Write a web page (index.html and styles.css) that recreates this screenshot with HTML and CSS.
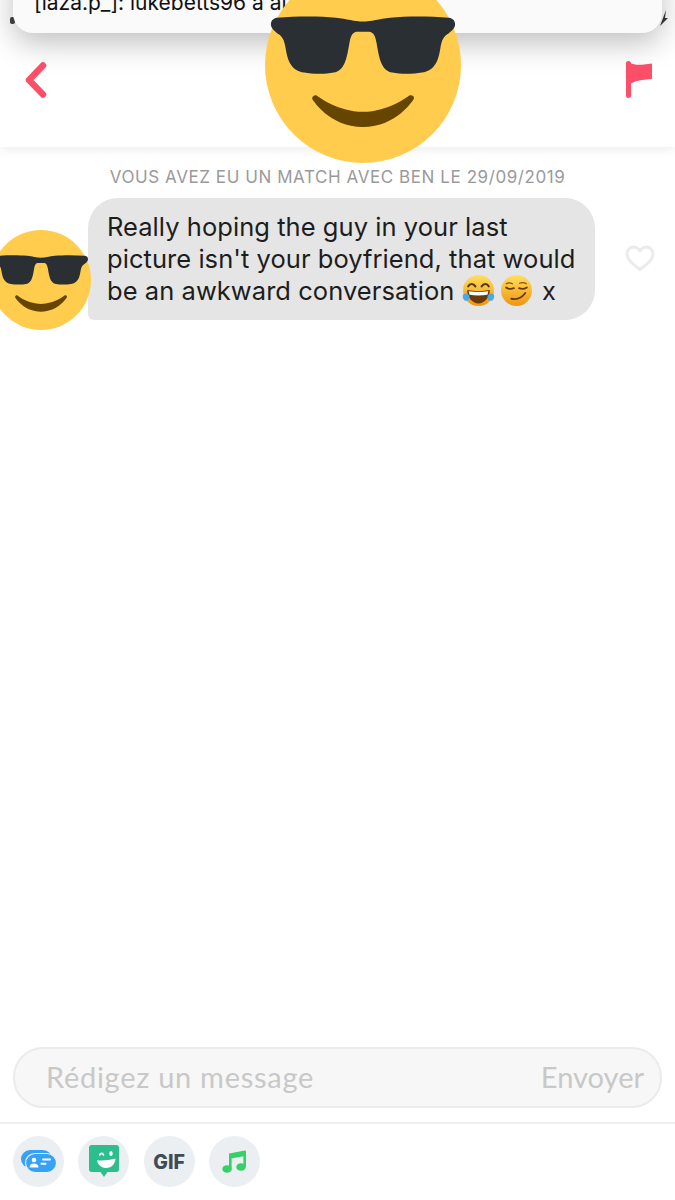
FILE: index.html
```html
<!DOCTYPE html>
<html lang="fr">
<head>
    <meta charset="UTF-8">
    <meta name="viewport" content="width=device-width, initial-scale=1.0">
    <title>Conversation</title>
    <link rel="stylesheet" href="styles.css">
</head>
<body>
    <svg class="defs" width="0" height="0">
        <symbol id="cool" viewBox="0 0 36 36">
            <circle cx="18" cy="18" r="18" fill="#ffcc4d"/>
            <path fill="#664500" d="M8.900 23.700C9.100 23.500 9.300 23.500 9.500 23.600C9.500 23.600 13.300 26.600 18 26.600C22.700 26.600 26.500 23.600 26.500 23.600C26.700 23.500 27 23.500 27.200 23.700C27.400 23.900 27.400 24.100 27.300 24.300C27.300 24.300 24.200 29.400 18 29.400C11.800 29.400 8.700 24.300 8.700 24.300C8.600 24.100 8.700 23.900 8.900 23.700Z"/>
            <path fill="#292f33" d="M2.200 9.300C6 9 10 9 13 9.300C15 9.500 16.500 10 18 10C19.500 10 21 9.500 23 9.300C26 9 30 9 33.800 9.300C34.600 9.400 35 10 34.900 10.700C34.800 11.400 34 12 33.400 12.400C32.600 13 32.400 13.800 32.200 15C31.800 17.300 31.200 19 28.800 19.400C27.200 19.700 24.800 19.700 23.400 19.400C21.400 19 21 17 20.500 14C20.200 12.300 19.800 11.900 18.900 11.900H17.100C16.200 11.900 15.800 12.300 15.500 14C15 17 14.600 19 12.600 19.400C11.200 19.700 8.800 19.700 7.200 19.400C4.800 19 4.200 17.300 3.800 15C3.600 13.800 3.400 13 2.600 12.400C2 12 1.200 11.400 1.100 10.700C1 10 1.400 9.400 2.200 9.300Z"/>
        </symbol>
    </svg>

    <span class="status-dot"></span>
    <svg class="status-bolt" viewBox="0 0 8 16"><path fill="#3a3a3a" d="M6 0 0 16l8-8H5z"/></svg>

    <header class="top-bar">
        <svg class="back" viewBox="0 0 24 36"><path d="M19 3.500 5 18l14 14.500" fill="none" stroke="#fd5068" stroke-width="6.500" stroke-linecap="round" stroke-linejoin="round"/></svg>
        <svg class="flag" viewBox="0 0 28 37"><path fill="#fd5068" d="M1 2.500a2.500 2.500 0 0 1 5 0C10 4 15 4 19 3.500L27 2.500V18C22 18 17 19 12 20 9.500 20.800 8 21.500 6 22.500V34.500a2.500 2.500 0 0 1-5 0z"/></svg>
    </header>

    <div class="notif"><span class="notif-text">[laza.p_]: lukebetts96 a ai</span></div>
    <svg class="big-face"><use href="#cool"/></svg>

    <main class="chat">
        <p class="match-date">VOUS AVEZ EU UN MATCH AVEC BEN LE 29/09/2019</p>
        <div class="msg-row">
            <svg class="avatar"><use href="#cool"/></svg>
            <div class="bubble">
                Really hoping the guy in your last<br>
                picture isn't your boyfriend, that would<br>
                be an awkward conversation
                <svg class="emoji emoji-joy" viewBox="0 0 32 32">
                    <defs>
                        <linearGradient id="gold" x1="0" y1="0" x2="0" y2="1">
                            <stop offset="0" stop-color="#ffdf5e"/>
                            <stop offset="1" stop-color="#f0950f"/>
                        </linearGradient>
                    </defs>
                    <circle cx="16" cy="16" r="15" fill="url(#gold)"/>
                    <path d="M6 12c1.500-3 5-3 7 0M19 12c2-3 5.500-3 7 0" fill="none" stroke="#5a3608" stroke-width="2" stroke-linecap="round"/>
                    <path fill="#6b3a0b" d="M5 15.500c7 1.500 15 1.500 22 0 0 7-5 13-11 13S5 22.500 5 15.500z"/>
                    <path fill="#fff" d="M6.500 16.700c6 1 13 1 19 0l-.8 3.500c-5.500 1-11.900 1-17.400 0z"/>
                    <path fill="#4aa8ea" d="M1 20c2-2 5-1 6 1 1 3-1 5-3 5s-4-3-3-6zM31 20c-2-2-5-1-6 1-1 3 1 5 3 5s4-3 3-6z"/>
                </svg>
                <svg class="emoji emoji-smirk" viewBox="0 0 32 32">
                    <circle cx="16" cy="16" r="15" fill="url(#gold)"/>
                    <path d="M6 9.500c2-1.200 4-1.200 6 0M19 9c2.500-1 4.500-.7 6.500.5" fill="none" stroke="#8a5210" stroke-width="1.200" stroke-linecap="round"/>
                    <path d="M6 13c2 1.500 5 1.800 7.500.8M18.500 13.800c2.500 1 5.500.7 7.500-.8" fill="none" stroke="#6b3a0b" stroke-width="1.800" stroke-linecap="round"/>
                    <path d="M11 24c5 1.200 10-.5 13.500-5.500" fill="none" stroke="#6b3a0b" stroke-width="1.800" stroke-linecap="round"/>
                </svg>
                <span class="x">x</span>
            </div>
            <svg class="heart" viewBox="0 0 30 27"><path d="M15 24.500C9 19.500 2 15.500 2 9 2 5 5 2 8.500 2c2.800 0 5 1.500 6.500 4 1.500-2.500 3.700-4 6.500-4C25 2 28 5 28 9c0 6.500-7 10.500-13 15.500z" fill="none" stroke="#ebebeb" stroke-width="3" stroke-linejoin="round"/></svg>
        </div>
    </main>

    <div class="composer">
        <div class="input-box">
            <span class="placeholder">Rédigez un message</span>
            <span class="send">Envoyer</span>
        </div>
    </div>

    <footer class="tools">
        <div class="tool">
            <svg viewBox="0 0 36 23" width="36" height="23">
                <rect x="0" y="0" width="31" height="18" rx="9" fill="#35a2f5"/>
                <rect x="4.500" y="3.500" width="31" height="19" rx="9.500" fill="#35a2f5" stroke="#eceff2" stroke-width="1.200"/>
                <circle cx="13" cy="10" r="2.300" fill="#fff"/>
                <path fill="#fff" d="M8.500 17.500c0-2.700 2-4 4.500-4s4.500 1.300 4.500 4z"/>
                <rect x="21" y="8.500" width="9" height="2" rx="1" fill="#fff"/>
                <rect x="19.500" y="12.800" width="6" height="2" rx="1" fill="#fff"/>
            </svg>
        </div>
        <div class="tool">
            <svg viewBox="0 0 30 33" width="30" height="33">
                <path fill="#2ebd8c" d="M2.500 0h25C29 0 30 1 30 2.500v22c0 1.500-1 2.500-2.500 2.500H18.500L15 32l-3.500-5H2.500C1 27 0 26 0 24.500v-22C0 1 1 0 2.500 0z"/>
                <path d="M10.800 9.800c.6-1.800 3-1.800 3.600 0" fill="none" stroke="#fff" stroke-width="1.800" stroke-linecap="round"/>
                <ellipse cx="22" cy="8.500" rx="1.700" ry="2.500" fill="#fff"/>
                <path fill="#fff" d="M8 15.200c6 .6 12.500 0 18.500-1.700-.3 5.500-4 9.500-9 9.500s-9-3.500-9.500-7.800z"/>
            </svg>
        </div>
        <div class="tool tool-gif">GIF</div>
        <div class="tool">
            <svg viewBox="0 0 24 23" width="24" height="23">
                <path fill="#35d068" d="M7 3.500 23 .5c.6-.1 1 .3 1 .9V17h-2.600V6.200L9.600 8.400V19.500H7z"/>
                <ellipse cx="5" cy="19" rx="4.700" ry="3.800" fill="#35d068"/>
                <ellipse cx="19" cy="17" rx="4.700" ry="3.800" fill="#35d068"/>
            </svg>
        </div>
    </footer>
</body>
</html>
```

FILE: styles.css
```css
* {
    margin: 0;
    padding: 0;
    box-sizing: border-box;
}
html, body {
    height: 1200px;
}
body {
    position: relative;
    display: flex;
    flex-direction: column;
    overflow: hidden;
    background: #fff;
    font-family: "Inter", "Liberation Sans", sans-serif;
}
.defs {
    position: absolute;
}

/* barre du haut */
.top-bar {
    flex: none;
    height: 147px;
    padding: 61px 22px 0 24px;
    display: flex;
    justify-content: space-between;
    align-items: flex-start;
    box-shadow: 0 2px 10px rgba(0, 0, 0, 0.08);
}
.back {
    width: 24px;
    height: 36px;
    margin-top: 1px;
}
.flag {
    width: 28px;
    height: 37px;
}

/* morceaux de la barre de statut derriere la notification */
.status-dot {
    position: absolute;
    left: 10px;
    top: 17px;
    width: 5px;
    height: 7px;
    border-radius: 2px;
    background: #444;
}
.status-bolt {
    position: absolute;
    left: 660px;
    top: 10px;
    width: 8px;
    height: 16px;
}

.notif {
    position: absolute;
    left: 13px;
    top: -40px;
    width: 649px;
    height: 73px;
    padding: 31px 0 0 21px;
    border-radius: 20px;
    background: #fafafa;
    box-shadow: 0 10px 30px rgba(0, 0, 0, 0.25);
}
.notif-text {
    font-size: 21px;
    line-height: 24px;
    color: #111;
}
.big-face {
    position: absolute;
    left: 265px;
    top: -33px;
    width: 196px;
    height: 196px;
}

/* conversation */
.chat {
    flex: 1;
    padding-top: 20px;
}
.match-date {
    text-align: center;
    font-size: 17px;
    line-height: 20px;
    letter-spacing: 0.57px;
    color: #9a9a9a;
}
.msg-row {
    display: flex;
    align-items: flex-start;
    margin-top: 11px;
}
.avatar {
    flex: none;
    width: 100px;
    height: 100px;
    margin: 32px -3px 0 -9px;
    position: relative;
    z-index: 1;
}
.bubble {
    flex: none;
    width: 507px;
    height: 122px;
    padding: 13px 0 0 19px;
    border-radius: 30px 30px 30px 6px;
    background: #e5e5e5;
    font-size: 25.5px;
    line-height: 32px;
    letter-spacing: 0.05px;
    color: #1d1d1d;
}
.emoji {
    width: 33px;
    height: 33px;
    margin: -6px 0;
    vertical-align: -1px;
}
.emoji-joy {
    margin-left: 0;
}
.emoji-smirk {
    margin-left: -2px;
}
.x {
    margin-left: 2px;
}
.heart {
    flex: none;
    width: 30px;
    height: 27px;
    margin: 47px 0 0 30px;
}

/* saisie */
.composer {
    flex: none;
    padding: 0 13px 14px;
}
.input-box {
    height: 61px;
    padding: 0 16px 2px 31px;
    display: flex;
    justify-content: space-between;
    align-items: center;
    border: 2px solid #ebebeb;
    border-radius: 30px;
    background: #f7f7f7;
    font-family: "Lato", "Open Sans", sans-serif;
    font-size: 29px;
    color: #c8c8c8;
}
.placeholder {
    letter-spacing: 0.72px;
}
.tools {
    flex: none;
    height: 78px;
    padding: 12px 13px 0;
    display: flex;
    align-items: flex-start;
    gap: 14.3px;
    border-top: 2px solid #f0f0f0;
}
.tool {
    flex: none;
    width: 51px;
    height: 51px;
    display: flex;
    align-items: center;
    justify-content: center;
    border-radius: 50%;
    background: #eceff2;
}
.tool-gif {
    font-size: 19.5px;
    font-weight: 800;
    color: #424b55;
}
```
